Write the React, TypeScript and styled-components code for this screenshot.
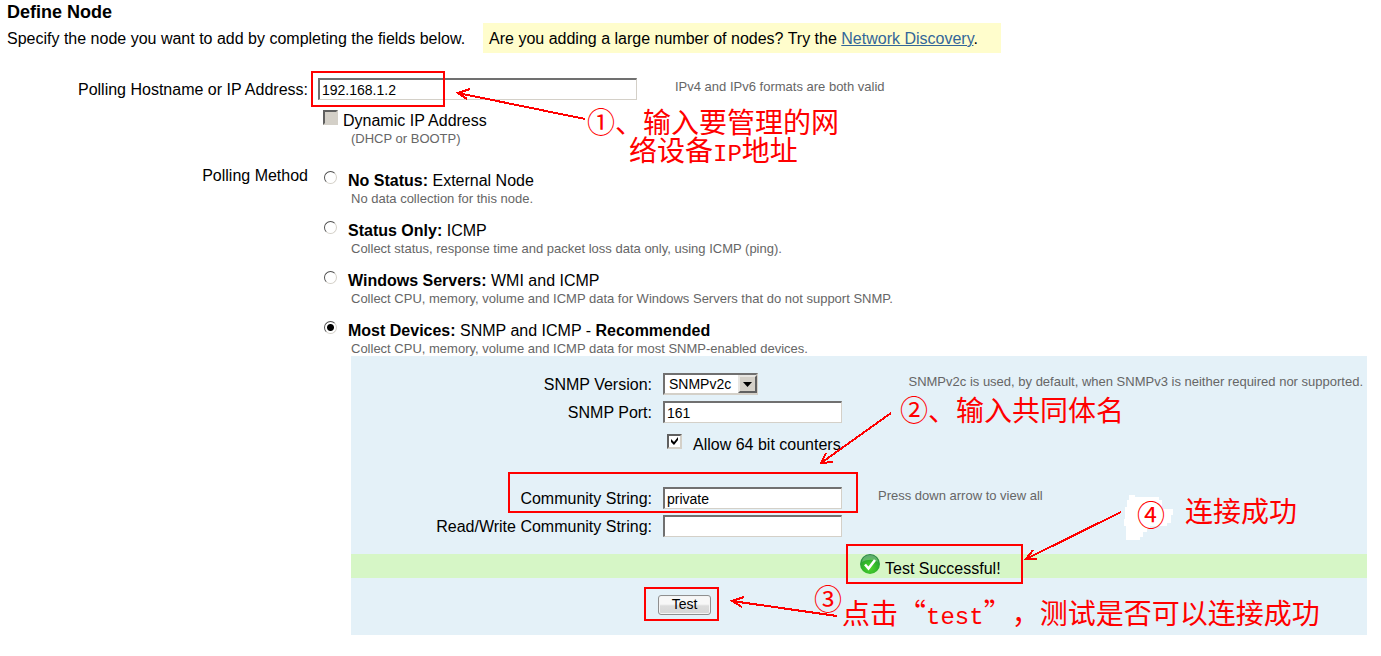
import React from "react";
import styled, { createGlobalStyle } from "styled-components";

const RED = "#ff0000";

const GlobalStyle = createGlobalStyle`
  *, *::before, *::after { box-sizing: border-box; }
  body {
    margin: 0;
    background: #ffffff;
    color: #000000;
    font: 16px/20px "Liberation Sans", Arial, sans-serif;
  }
`;

const Page = styled.main`
  position: relative;
  padding: 0 14px 21px 0;
`;

const Title = styled.h1`
  margin: 0;
  padding: 1px 0 0 7px;
  font-size: 18px;
  line-height: 22px;
`;

const Intro = styled.div`
  display: flex;
  gap: 18px;
  padding-left: 7px;
  line-height: 20px;
`;

const IntroText = styled.span`
  padding: 6px 0 4px;
`;

const Hint = styled.span`
  padding: 6px 23px 4px 6px;
  background: #fffdcc;
`;

const Link = styled.a`
  color: #336699;
`;

const FormRow = styled.div<{ $top: number }>`
  display: grid;
  grid-template-columns: 308px 1fr;
  column-gap: 10px;
  margin-top: ${(p) => p.$top}px;
`;

const FormLabel = styled.label<{ $line?: number }>`
  text-align: right;
  line-height: ${(p) => p.$line ?? 22}px;
`;

const Line = styled.div`
  display: flex;
  align-items: center;
  height: 28px;
`;

const Note = styled.div<{ $indent?: number }>`
  padding-left: ${(p) => p.$indent ?? 0}px;
  color: #666666;
  font-size: 13px;
  line-height: 16px;
`;

const HostNote = styled(Note)`
  margin: 0 0 4px 38px;
`;

const Marked = styled.div`
  position: relative;
`;

const Frame = styled.span<{ $inset: string }>`
  position: absolute;
  inset: ${(p) => p.$inset};
  border: 2px solid ${RED};
  pointer-events: none;
`;

const TextBox = styled.input<{ $width: number }>`
  display: block;
  width: ${(p) => p.$width}px;
  height: 22px;
  padding: 0 0 0 2px;
  border: 2px solid;
  border-color: #707070 #d4d0c8 #d4d0c8 #707070;
  border-width: 2px 1px 1px 2px;
  border-radius: 0;
  outline: 0;
  background: #ffffff;
  color: #000000;
  font: 14px "Liberation Sans", Arial, sans-serif;
`;

const CheckLine = styled.div<{ $gap: number; $indent: number; $height: number }>`
  display: flex;
  align-items: center;
  gap: ${(p) => p.$gap}px;
  height: ${(p) => p.$height}px;
  padding-left: ${(p) => p.$indent}px;
  white-space: nowrap;
  label {
    padding-top: 2px;
  }
`;

const TickHolder = styled.span`
  position: relative;
  display: block;
  width: 15px;
  height: 20px;
  svg {
    position: absolute;
    left: 4px;
    top: 3px;
    pointer-events: none;
  }
`;

const TickBox = styled.input`
  appearance: none;
  display: block;
  width: 15px;
  height: 15px;
  margin: 0;
  border: 2px solid;
  border-color: #606060 #d4d0c8 #d4d0c8 #606060;
  background: #ffffff;
  &:disabled {
    background: #d4d0c8;
  }
`;

const Option = styled.div`
  display: grid;
  grid-template-columns: 24px 1fr;
  column-gap: 6px;
  height: 50px;
  line-height: 22px;
  &:last-of-type {
    height: 36px;
  }
`;

const OptionNote = styled(Note)`
  line-height: 14px;
`;

const Options = styled.div`
  padding-top: 5px;
`;

const Radio = styled.input`
  appearance: none;
  width: 13px;
  height: 13px;
  margin: 1px 0 0 6px;
  border: 1px solid;
  border-color: #505050 #d4d0c8 #d4d0c8 #505050;
  border-radius: 50%;
  background: #ffffff;
  &:checked {
    background: radial-gradient(circle, #000000 3px, #ffffff 4px);
  }
`;

const Panel = styled.section`
  margin-left: 33px;
  padding: 14px 0;
  background: #e4f1f8;
`;

const PanelRow = styled.div`
  display: grid;
  grid-template-columns: 301px 179px 1fr;
  column-gap: 11px;
  align-items: center;
  min-height: 28px;
  & > label {
    padding-top: 2px;
  }
`;

const PanelNote = styled(Note)<{ $right?: boolean }>`
  padding: 0 4px 5px 25px;
  text-align: ${(p) => (p.$right ? "right" : "left")};
  white-space: nowrap;
`;

const Spacer = styled.div<{ $height: number }>`
  height: ${(p) => p.$height}px;
`;

const SelectHolder = styled.div`
  position: relative;
  width: 95px;
`;

const Select = styled.select`
  appearance: none;
  display: block;
  width: 100%;
  height: 22px;
  padding: 0 20px 0 4px;
  border: 2px solid;
  border-color: #707070 #d4d0c8 #d4d0c8 #707070;
  border-radius: 0;
  background: #ffffff;
  color: #000000;
  font: 14px "Liberation Sans", Arial, sans-serif;
`;

const DropArrow = styled.span`
  position: absolute;
  top: 2px;
  right: 1px;
  display: grid;
  place-items: center;
  width: 19px;
  height: 18px;
  border: 2px solid;
  border-color: #e8e6e2 #606060 #606060 #e8e6e2;
  background: #d4d0c8;
  pointer-events: none;
`;

const Success = styled.div`
  display: flex;
  height: 24px;
  padding-left: 495px;
  background: #d6f6c6;
`;

const SuccessMessage = styled.div`
  position: relative;
  display: flex;
  gap: 4px;
  padding: 0 22px 0 14px;
  line-height: 30px;
`;

const Actions = styled.div`
  display: flex;
  padding: 17px 0 6px 307px;
`;

const Button = styled.button`
  display: block;
  width: 53px;
  height: 20px;
  padding: 0 0 4px;
  border: 1px solid #8f8f8f;
  border-radius: 3px;
  background: linear-gradient(#f7f7f7 0 45%, #dcdcdc 55%, #d6d6d6);
  box-shadow: inset 0 0 0 1px #f4f4f4;
  color: #000000;
  font: 14px/16px "Liberation Sans", Arial, sans-serif;
`;

const Drawing = styled.svg`
  position: absolute;
  left: 0;
  top: 0;
  pointer-events: none;
`;

const Callout = styled.div<{ $x: number; $y: number }>`
  position: absolute;
  left: ${(p) => p.$x}px;
  top: ${(p) => p.$y}px;
  color: ${RED};
  font: 28px/28px "Noto Sans CJK SC", sans-serif;
  text-spacing-trim: space-all;
  white-space: nowrap;
`;

const Indented = styled.div`
  padding-left: 42px;
`;

const Latin = styled.span`
  font-family: "Liberation Mono", monospace;
  font-size: 24px;
`;

const methods = [
  { id: "none", name: "No Status:", kind: "External Node", note: "No data collection for this node." },
  {
    id: "icmp",
    name: "Status Only:",
    kind: "ICMP",
    note: "Collect status, response time and packet loss data only, using ICMP (ping).",
  },
  {
    id: "wmi",
    name: "Windows Servers:",
    kind: "WMI and ICMP",
    note: "Collect CPU, memory, volume and ICMP data for Windows Servers that do not support SNMP.",
  },
  {
    id: "snmp",
    name: "Most Devices:",
    kind: "SNMP and ICMP - ",
    extra: "Recommended",
    note: "Collect CPU, memory, volume and ICMP data for most SNMP-enabled devices.",
  },
];

const SuccessIcon = () => (
  <svg width="21" height="21" viewBox="0 0 21 21" aria-hidden="true">
    <defs>
      <radialGradient id="ball" cx="50%" cy="70%" r="65%">
        <stop offset="0" stopColor="#4fd62c" />
        <stop offset="0.6" stopColor="#2fb32a" />
        <stop offset="1" stopColor="#2a8a45" />
      </radialGradient>
    </defs>
    <circle cx="10" cy="10" r="10" fill="url(#ball)" />
    <path d="M2 8a8 7 0 0 1 16 0c-4-3-11-3-16 0z" fill="#ffffff" opacity="0.25" />
    <path d="M5 10.5l3.5 4L15 6" fill="none" stroke="#ffffff" strokeWidth="2.6" />
  </svg>
);

const Arrows = () => (
  <Drawing
    width="1180"
    height="630"
    viewBox="0 0 1180 630"
    shapeRendering="crispEdges"
    aria-hidden="true"
  >
    <path
      d="M1129 495h6v2h24v3h3v9h11v6h-2v8h-4v3h-17v3h-3v3h-4v5h-3v3h-14v-14h-2v-7h1v-12h2v-7h2z"
      fill="#ffffff"
    />
    <g fill="none" stroke={RED} strokeWidth="2">
      <path d="M585 119L458 93M470 89L458 93L467 99" />
      <path d="M891 413L821 463M826 453L821 463L833 462" />
      <path d="M837 616L732 601M744 597L732 601L742 607" />
      <path d="M1121 512L1026 559M1033 550L1026 559L1037 559" />
    </g>
  </Drawing>
);

export default function App() {
  return (
    <Page>
      <GlobalStyle />
      <Title>Define Node</Title>
      <Intro>
        <IntroText>Specify the node you want to add by completing the fields below.</IntroText>
        <Hint>
          Are you adding a large number of nodes? Try the <Link href="#discovery">Network Discovery</Link>.
        </Hint>
      </Intro>

      <FormRow $top={22}>
        <FormLabel htmlFor="host" $line={30}>
          Polling Hostname or IP Address:
        </FormLabel>
        <div>
          <Line>
            <Marked>
              <TextBox id="host" $width={319} defaultValue="192.168.1.2" />
              <Frame $inset="-7px 192px -7px -7px" />
            </Marked>
            <HostNote>IPv4 and IPv6 formats are both valid</HostNote>
          </Line>
          <Spacer $height={6} />
          <CheckLine $gap={5} $indent={5} $height={22}>
            <TickHolder>
              <TickBox id="dynamic" type="checkbox" disabled />
            </TickHolder>
            <label htmlFor="dynamic">Dynamic IP Address</label>
          </CheckLine>
          <Note $indent={33}>(DHCP or BOOTP)</Note>
        </div>
      </FormRow>

      <FormRow $top={18}>
        <FormLabel as="span" id="method">
          Polling Method
        </FormLabel>
        <div>
          <Options role="radiogroup" aria-labelledby="method">
            {methods.map((m) => (
              <Option key={m.id}>
                <Radio type="radio" name="method" id={m.id} defaultChecked={m.id === "snmp"} />
                <div>
                  <label htmlFor={m.id}>
                    <b>{m.name}</b> {m.kind}
                    {m.extra && <b>{m.extra}</b>}
                  </label>
                  <OptionNote $indent={3}>{m.note}</OptionNote>
                </div>
              </Option>
            ))}
          </Options>

          <Panel>
            <PanelRow>
              <FormLabel htmlFor="version">SNMP Version:</FormLabel>
              <SelectHolder>
                <Select id="version" defaultValue="SNMPv2c">
                  <option>SNMPv1</option>
                  <option>SNMPv2c</option>
                  <option>SNMPv3</option>
                </Select>
                <DropArrow>
                  <svg width="9" height="5" viewBox="0 0 9 5" aria-hidden="true">
                    <path d="M0 0h9L4.5 5z" />
                  </svg>
                </DropArrow>
              </SelectHolder>
              <PanelNote $right>
                SNMPv2c is used, by default, when SNMPv3 is neither required nor supported.
              </PanelNote>
            </PanelRow>
            <PanelRow>
              <FormLabel htmlFor="port">SNMP Port:</FormLabel>
              <TextBox id="port" $width={179} defaultValue="161" />
            </PanelRow>
            <PanelRow>
              <span />
              <CheckLine $gap={11} $indent={4} $height={36}>
                <TickHolder>
                  <TickBox id="counters" type="checkbox" defaultChecked />
                  <svg width="8" height="8" viewBox="0 0 8 8" aria-hidden="true">
                    <path d="M0 2l3 3 4-5v3L3 8 0 5z" />
                  </svg>
                </TickHolder>
                <label htmlFor="counters">Allow 64 bit counters</label>
              </CheckLine>
            </PanelRow>
            <Spacer $height={22} />
            <PanelRow>
              <FormLabel htmlFor="community">Community String:</FormLabel>
              <Marked>
                <TextBox id="community" $width={179} defaultValue="private" />
                <Frame $inset="-15px -16px -4px -155px" />
              </Marked>
              <PanelNote>Press down arrow to view all</PanelNote>
            </PanelRow>
            <PanelRow>
              <FormLabel htmlFor="rw">Read/Write Community String:</FormLabel>
              <TextBox id="rw" $width={179} />
            </PanelRow>
            <Spacer $height={14} />
            <Success role="status">
              <SuccessMessage>
                <SuccessIcon />
                Test Successful!
                <Frame $inset="-10px 0 -6px 0" />
              </SuccessMessage>
            </Success>
            <Actions>
              <Marked>
                <Button type="button">Test</Button>
                <Frame $inset="-8px -8px -6px -14px" />
              </Marked>
            </Actions>
          </Panel>
        </div>
      </FormRow>

      <Arrows />
      <Callout $x={587} $y={107} lang="zh-CN">
        ①、输入要管理的网
        <Indented>
          络设备<Latin>IP</Latin>地址
        </Indented>
      </Callout>
      <Callout $x={900} $y={395} lang="zh-CN">
        ②、输入共同体名
      </Callout>
      <Callout $x={1137} $y={500}>④</Callout>
      <Callout $x={1185} $y={496} lang="zh-CN">
        连接成功
      </Callout>
      <Callout $x={814} $y={584}>③</Callout>
      <Callout $x={842} $y={598} lang="zh-CN">
        点击“<Latin>test</Latin>”，测试是否可以连接成功
      </Callout>
    </Page>
  );
}
